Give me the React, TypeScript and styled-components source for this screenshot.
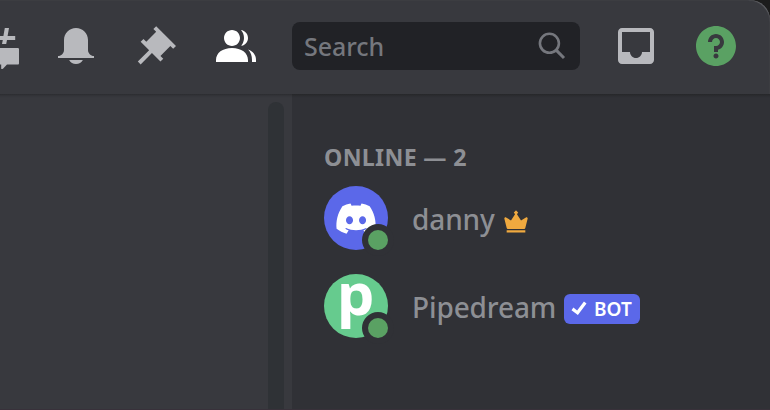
import React from "react";
import styled, { createGlobalStyle } from "styled-components";

const GlobalStyle = createGlobalStyle`
  body { margin: 0; background: #1c1c1c; overflow: hidden; }
  * { box-sizing: border-box; }
  svg { display: block; flex: none; }
`;

const Window = styled.div`
  width: 770px;
  height: 410px;
  display: flex;
  flex-direction: column;
  background: #38393e;
  border-top-right-radius: 20px;
  border-bottom: 1px solid #38313a;
  box-shadow: inset -2px 2px 1px -2px #66676b;
  overflow: hidden;
  font-family: "Noto Sans", sans-serif;
`;

const Toolbar = styled.header`
  height: 94px;
  flex: none;
  display: flex;
  align-items: center;
  padding-bottom: 2px;
  color: #b8b9bd;
`;

const Actions = styled.div`
  display: flex;
  gap: 32px;
  margin-left: -28px;
`;

const SearchBox = styled.div`
  width: 288px;
  height: 48px;
  margin: 0 32px;
  padding: 0 11px 0 12px;
  display: flex;
  align-items: center;
  justify-content: space-between;
  border-radius: 8px;
  background: #212226;
  color: #75777d;
  font-size: 25px;
  font-weight: 500;
  letter-spacing: -0.05px;
  line-height: 48px;
`;

const Icon = styled.svg<{ $tone?: string }>`
  width: 48px;
  height: 48px;
  fill: currentColor;
  color: ${(p) => p.$tone ?? "inherit"};
`;

const HelpIcon = styled(Icon)`
  margin-left: 32px;
`;

const Content = styled.div`
  flex: 1;
  display: flex;
  background: linear-gradient(#2b2c30, #34353a 2px, transparent 4px);
`;

const Chat = styled.main`
  width: 292px;
  display: flex;
  justify-content: flex-end;
  padding: 8px 8px 0 0;
`;

const ScrollTrack = styled.div`
  width: 16px;
  border-radius: 8px 8px 0 0;
  background: #2f3236;
`;

const Sidebar = styled.aside`
  flex: 1;
  padding: 47px 32px 0;
  background: linear-gradient(#26272a, #2c2d31 2px, #303136 4px);
  color: #8d8f94;
`;

const GroupTitle = styled.h2`
  margin: 0;
  height: 33px;
  font-size: 23.2px;
  line-height: 32px;
  font-weight: 700;
  letter-spacing: 0.32px;
  white-space: nowrap;
`;

const Member = styled.div`
  height: 64px;
  margin: 12px 0 24px;
  display: flex;
  align-items: center;
`;

const Avatar = styled.svg`
  width: 64px;
  height: 64px;
  margin-right: 24px;
  overflow: visible;
`;

const Name = styled.span<{ $width: number }>`
  width: ${(p) => p.$width}px;
  margin-top: 2px;
  font-size: 28px;
  font-weight: 500;
  letter-spacing: -0.12px;
  line-height: 36px;
  white-space: nowrap;
`;

const Crown = styled.svg`
  width: 28px;
  height: 28px;
  margin: 8px 0 0 8px;
`;

const BotTag = styled.span`
  height: 30px;
  width: 76px;
  margin: 6px 0 0 8px;
  display: flex;
  align-items: center;
  border-radius: 6px;
  background: #5b68e9;
  color: #fff;
  font-size: 19px;
  line-height: 30px;
  font-weight: 600;
`;

const Check = styled.svg`
  width: 30px;
  height: 30px;
`;

const paths = {
  bell: "M18 9V14C18 15.657 19.344 17 21 17V18H3V17C4.656 17 6 15.657 6 14V9C6 5.686 8.686 3 12 3C15.314 3 18 5.686 18 9ZM12 21C10.524 21 9.248 20.19 8.555 19H15.445C14.752 20.19 13.476 21 12 21Z",
  pin: "M22 12L12.101 2.101L10.686 3.514L12.101 4.929L7.151 9.878L5.736 8.465L4.322 9.88L8.565 14.122L2.908 19.778L4.322 21.192L9.979 15.536L14.222 19.778L15.636 18.364L14.222 16.95L19.171 12L20.586 13.414L22 12Z",
  members:
    "M14 8.006C14 10.211 12.206 12.006 10 12.006C7.795 12.006 6 10.211 6 8.006C6 5.801 7.794 4.006 10 4.006C12.206 4.006 14 5.801 14 8.006ZM2 19.006C2 15.473 5.29 13.006 10 13.006C14.711 13.006 18 15.473 18 19.006V20.006H2V19.006ZM20 20.006H22V19.006C22 16.443 20.5 14.6 18.1 13.7C19.4 15.1 20 16.806 20 19.006V20.006ZM14.883 11.908C16.666 11.504 18 9.908 18 8.006C18 5.969 16.469 4.282 14.497 4.037C15.432 5.095 16 6.485 16 8.006C16 9.449 15.489 10.774 14.638 11.81L14.883 11.908Z",
  inbox:
    "M19 3H4.99C3.88 3 3.01 3.89 3.01 5L3 19C3 20.1 3.88 21 4.99 21H19C20.1 21 21 20.1 21 19V5C21 3.89 20.1 3 19 3ZM19 15H15C15 16.66 13.65 18 12 18C10.35 18 9 16.66 9 15H4.99V5H19V15Z",
  help: "M12 2C6.486 2 2 6.487 2 12C2 17.515 6.486 22 12 22C17.514 22 22 17.515 22 12C22 6.487 17.514 2 12 2ZM12 18.25C11.31 18.25 10.75 17.691 10.75 17C10.75 16.31 11.31 15.75 12 15.75C12.69 15.75 13.25 16.31 13.25 17C13.25 17.691 12.69 18.25 12 18.25ZM13 13.875V15H11V12H12C13.104 12 14 11.103 14 10C14 8.896 13.104 8 12 8C10.896 8 10 8.896 10 10H8C8 7.795 9.795 6 12 6C14.205 6 16 7.795 16 10C16 11.861 14.723 13.429 13 13.875Z",
  threads:
    "M16.4 3H18.5L17.8 7H21.6V9H17.5L17.1 11H15L15.4 9H9V7H15.7ZM11 13H22.9C23.3 13 23.5 13.3 23.5 13.7V20.6C23.5 21 23.3 21.3 22.9 21.3H17.5L15.6 23.2C15.1 23.7 14.6 23.6 14.6 23.2V21.3H11Z",
  crown:
    "M13.657 5.429C13.888 5.29 14.181 5.304 14.397 5.465C14.613 5.626 14.712 5.901 14.647 6.162L13.314 11.495C13.239 11.793 12.973 12.001 12.667 12.001H3.333C3.027 12.001 2.761 11.792 2.686 11.495L1.353 6.162C1.288 5.901 1.387 5.626 1.603 5.465C1.82 5.305 2.112 5.291 2.343 5.429L5.132 7.102L7.446 3.631L7.545 3.545L6.903 2.903C6.773 2.773 6.773 2.561 6.903 2.431L7.765 1.569C7.894 1.44 8.107 1.44 8.236 1.569L9.098 2.431C9.227 2.561 9.227 2.773 9.098 2.903L8.456 3.545L8.555 3.631L10.869 7.102L13.657 5.429ZM2.667 12.667H13.333V14.001H2.667V12.667Z",
  check: "M7.4,11.17,4,8.62,5,7.26l2,1.53L10.64,4l1.36,1Z",
  clyde:
    "M23.021 1.677C21.311 0.88 19.508 0.319 17.658 0C17.406 0.462 17.175 0.935 16.971 1.418C15.003 1.121 12.997 1.121 11.029 1.418C10.819 0.935 10.589 0.462 10.337 0.005C8.481 0.324 6.678 0.885 4.967 1.682C1.567 6.779 0.65 11.754 1.111 16.652C3.101 18.142 5.326 19.274 7.692 20C8.223 19.274 8.695 18.499 9.098 17.691C8.33 17.4 7.585 17.042 6.877 16.614C7.065 16.476 7.247 16.339 7.424 16.185C11.591 18.175 16.408 18.175 20.576 16.185C20.753 16.333 20.935 16.476 21.117 16.614C20.41 17.037 19.664 17.4 18.897 17.691C19.305 18.499 19.772 19.269 20.302 19.995C22.668 19.269 24.893 18.136 26.883 16.647H26.889C27.43 10.973 25.967 6.047 23.021 1.677ZM9.68 13.638C8.398 13.638 7.341 12.445 7.341 10.994C7.341 9.543 8.372 8.35 9.68 8.35C10.989 8.35 12.04 9.543 12.019 10.994C12.019 12.445 10.983 13.638 9.68 13.638ZM18.316 13.638C17.033 13.638 15.977 12.445 15.977 10.994C15.977 9.543 17.007 8.35 18.316 8.35C19.625 8.35 20.675 9.543 20.655 10.994C20.655 12.445 19.625 13.638 18.316 13.638Z",
};

const Glyph = ({ d, tone }: { d: string; tone?: string }) => (
  <Icon viewBox="0 0 24 24" $tone={tone}>
    <path d={d} fillRule="evenodd" />
  </Icon>
);

const Status = () => (
  <>
    <circle cx="54" cy="54" r="16" fill="#303136" />
    <circle cx="54" cy="54" r="10" fill="#5aa163" />
  </>
);

export default function App() {
  return (
    <>
      <GlobalStyle />
      <Window>
        <Toolbar>
          <Actions>
            <Glyph d={paths.threads} />
            <Glyph d={paths.bell} />
            <Glyph d={paths.pin} />
            <Glyph d={paths.members} tone="#fff" />
          </Actions>
          <SearchBox>
            <span>Search</span>
            <svg width="32" height="32" viewBox="0 0 32 32" fill="none" stroke="currentColor" strokeWidth="2.6">
              <circle cx="12.4" cy="13.3" r="9.5" />
              <path d="M19.2 20.1L27 28" strokeWidth="3" />
            </svg>
          </SearchBox>
          <Glyph d={paths.inbox} />
          <HelpIcon viewBox="0 0 24 24" $tone="#5aa163">
            <path d={paths.help} fillRule="evenodd" />
          </HelpIcon>
        </Toolbar>
        <Content>
          <Chat>
            <ScrollTrack />
          </Chat>
          <Sidebar>
            <GroupTitle>ONLINE — 2</GroupTitle>
            <Member>
              <Avatar viewBox="0 0 64 64">
                <circle cx="32" cy="32" r="32" fill="#5b68e9" />
                <path d={paths.clyde} transform="translate(10.9 17.6) scale(1.51)" fill="#fff" fillRule="evenodd" />
                <Status />
              </Avatar>
              <Name $width={82}>danny</Name>
              <Crown viewBox="0 0 16 16" fill="#efa93f">
                <path d={paths.crown} />
              </Crown>
            </Member>
            <Member>
              <Avatar viewBox="0 0 64 64">
                <circle cx="32" cy="32" r="32" fill="#66cb8e" />
                <text x="13" y="41" fill="#fff" fontFamily="Noto Sans, sans-serif" fontWeight="700" fontSize="58" textLength="37.5" lengthAdjust="spacingAndGlyphs">
                  p
                </text>
                <Status />
              </Avatar>
              <Name $width={144}>Pipedream</Name>
              <BotTag>
                <Check viewBox="0 0 16 16" fill="#fff">
                  <path d={paths.check} />
                </Check>
                BOT
              </BotTag>
            </Member>
          </Sidebar>
        </Content>
      </Window>
    </>
  );
}
